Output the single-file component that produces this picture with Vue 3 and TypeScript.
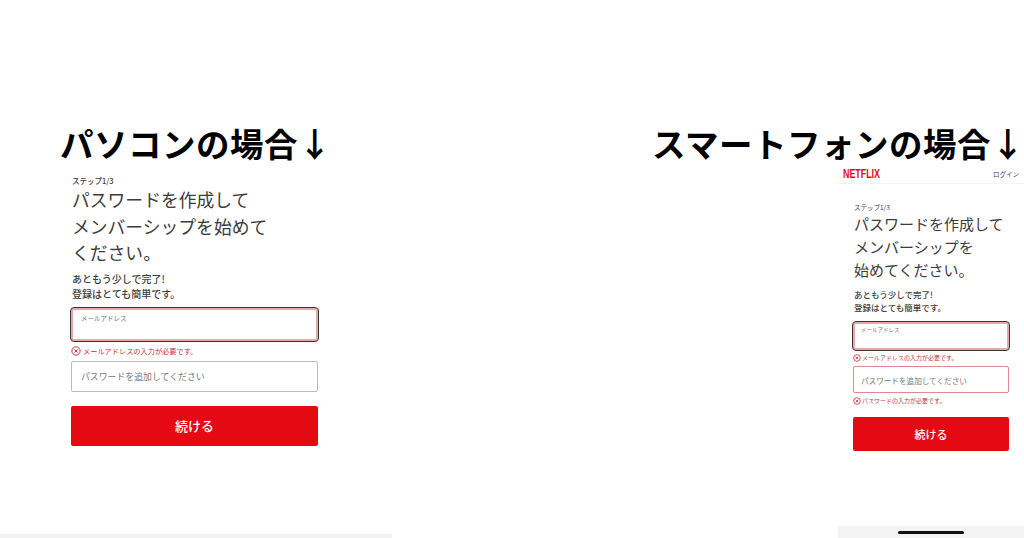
<script setup lang="ts">
const errors = {
  email: 'メールアドレスの入力が必要です。',
  password: 'パスワードの入力が必要です。',
}
</script>

<template>
  <div class="page">
    <section class="side pc">
      <h2 class="heading">パソコンの場合↓</h2>
      <div class="form">
        <p class="step">ステップ1/3</p>
        <h1 class="title">パスワードを作成して<br />メンバーシップを始めて<br />ください。</h1>
        <p class="lead">あともう少しで完了!<br />登録はとても簡単です。</p>
        <div class="field focused"><span class="label">メールアドレス</span></div>
        <p class="error">
          <svg viewBox="0 0 16 16" class="err-icon"><circle cx="8" cy="8" r="6.6" /><path d="M5.4 5.4l5.2 5.2M10.6 5.4l-5.2 5.2" /></svg>
          {{ errors.email }}
        </p>
        <div class="field plain"><span class="placeholder">パスワードを追加してください</span></div>
        <button class="next">続ける</button>
      </div>
      <div class="pc-bar"></div>
    </section>

    <section class="side sp">
      <h2 class="heading">スマートフォンの場合↓</h2>
      <div class="phone">
        <header class="phone-head">
          <span class="logo"><span>NETFLIX</span></span>
          <span class="login">ログイン</span>
        </header>
        <div class="form">
          <p class="step">ステップ1/3</p>
          <h1 class="title">パスワードを作成して<br />メンバーシップを<br />始めてください。</h1>
          <p class="lead">あともう少しで完了!<br />登録はとても簡単です。</p>
          <div class="field focused"><span class="label">メールアドレス</span></div>
          <p class="error">
            <svg viewBox="0 0 16 16" class="err-icon"><circle cx="8" cy="8" r="6.6" /><path d="M5.4 5.4l5.2 5.2M10.6 5.4l-5.2 5.2" /></svg>
            {{ errors.email }}
          </p>
          <div class="field invalid"><span class="placeholder">パスワードを追加してください</span></div>
          <p class="error">
            <svg viewBox="0 0 16 16" class="err-icon"><circle cx="8" cy="8" r="6.6" /><path d="M5.4 5.4l5.2 5.2M10.6 5.4l-5.2 5.2" /></svg>
            {{ errors.password }}
          </p>
          <button class="next">続ける</button>
        </div>
        <div class="home-bar"><i></i></div>
      </div>
    </section>
  </div>
</template>

<style>
html, body {
  margin: 0;
  background: #fff;
}
</style>

<style scoped>
.page {
  width: 1024px;
  height: 538px;
  display: flex;
  justify-content: space-between;
  overflow: hidden;
  font-family: "Noto Sans CJK JP", "Noto Sans", sans-serif;
  color: #3c3c3c;
}

p, h1, h2 {
  margin: 0;
  font-weight: 400;
}

.side {
  display: flex;
  flex-direction: column;
  height: 538px;
}

.heading {
  font-size: 33.5px;
  font-weight: 700;
  color: #000;
  line-height: 40px;
  white-space: nowrap;
  padding-top: 123px;
  letter-spacing: 0.5px;
}

/* left */
.pc {
  width: 392px;
}

.pc .heading {
  padding-left: 60px;
}

.pc .form {
  padding: 13px 74px 0 71px;
  flex: 1;
}

.pc .step {
  font-size: 7.5px;
  line-height: 10px;
  padding-left: 1px;
  font-weight: 500;
}

.pc .title {
  font-size: 17.8px;
  line-height: 26.5px;
  padding-left: 1px;
}

.pc .lead {
  font-size: 10px;
  line-height: 15px;
  margin-top: 5px;
  padding-left: 1px;
  font-weight: 500;
}

.pc .field {
  height: 29px;
}

.pc .field.focused {
  height: 29px;
  margin-top: 7px;
}

.pc .label {
  font-size: 6.5px;
  left: 8px;
  top: 3px;
}

.pc .placeholder {
  font-size: 8.9px;
  left: 9px;
}

.pc .error {
  font-size: 7.2px;
  margin: 5px 0 5px;
  height: 10px;
}

.pc .next {
  height: 40px;
  margin-top: 14px;
  font-size: 13px;
}

.pc-bar {
  height: 4px;
  background: #f2f2f2;
}

/* right */
.sp {
  width: 384px;
}

.sp .heading {
  padding-left: 12px;
}

.phone {
  margin-left: 198px;
  width: 186px;
  flex: 1;
  display: flex;
  flex-direction: column;
  padding-top: 2px;
}

.phone-head {
  height: 18px;
  flex: none;
  display: flex;
  align-items: center;
  justify-content: space-between;
  padding: 0 5px;
  border-bottom: 1px solid #f4f4f4;
}

.logo {
  width: 37px;
  height: 12px;
  overflow: visible;
  display: block;
  color: #e50914;
  font-family: "Liberation Sans", sans-serif;
  font-weight: 700;
  font-size: 12px;
  line-height: 12px;
}

.logo span {
  display: inline-block;
  transform: scale(0.74, 1);
  transform-origin: left center;
  white-space: nowrap;
}

.login {
  font-size: 6.5px;
  color: #444;
}

.sp .form {
  padding: 19px 15px 0 15px;
  flex: 1;
}

.sp .step {
  font-size: 6.5px;
  line-height: 9px;
  padding-left: 1px;
}

.sp .title {
  font-size: 15px;
  line-height: 23px;
  padding-left: 1px;
}

.sp .lead {
  font-size: 8.5px;
  line-height: 13px;
  margin-top: 7px;
  padding-left: 1px;
  font-weight: 500;
}

.sp .field {
  height: 25px;
}

.sp .field.focused {
  height: 24px;
  margin-top: 8px;
}

.sp .label {
  font-size: 5.5px;
  left: 6px;
  top: 2px;
}

.sp .placeholder {
  font-size: 7.6px;
  left: 7px;
}

.sp .error {
  font-size: 6px;
  margin: 3px 0 4px;
  height: 9px;
  gap: 1px;
}

.sp .err-icon {
  width: 8px;
  height: 8px;
}

.sp .next {
  height: 34px;
  margin-top: 12px;
  font-size: 11px;
}

.home-bar {
  height: 12px;
  flex: none;
  background: #f3f3f3;
  display: flex;
  justify-content: center;
  padding-top: 5px;
  box-sizing: border-box;
}

.home-bar i {
  display: block;
  width: 66px;
  height: 3px;
  border-radius: 2px;
  background: #111;
}

/* shared bits */
.field {
  position: relative;
  box-sizing: content-box;
  background: #fff;
  border-radius: 2px;
  border: 1px solid #bbb;
}

.field.focused {
  border: 2px solid #eba6aa;
  outline: 1.5px solid #333;
  outline-offset: 0;
  border-radius: 3px;
}

.field.invalid {
  border-color: #dd8a90;
}

.label,
.placeholder {
  position: absolute;
  color: #777;
  white-space: nowrap;
}

.placeholder {
  top: 50%;
  transform: translateY(-50%);
}

.error {
  display: flex;
  align-items: center;
  gap: 2px;
  color: #c8323c;
  white-space: nowrap;
}

.err-icon {
  width: 10px;
  height: 10px;
  flex: none;
  fill: none;
  stroke: #c8323c;
  stroke-width: 1.6;
}

.next {
  display: block;
  width: 100%;
  border: 0;
  border-radius: 2px;
  background: #e50914;
  color: #fff;
  font-family: inherit;
  font-weight: 500;
  padding: 0;
}
</style>
